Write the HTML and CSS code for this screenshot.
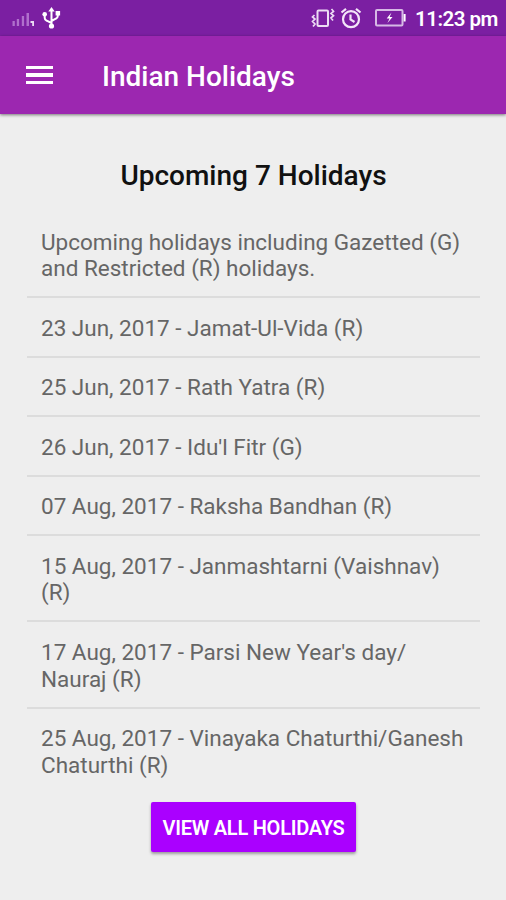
FILE: index.html
```html
<!DOCTYPE html>
<html lang="en">
<head>
    <meta charset="UTF-8">
    <meta name="viewport" content="width=device-width, initial-scale=1.0">
    <title>Indian Holidays</title>
    <link rel="stylesheet" href="styles.css">
</head>
<body>
    <!-- Status bar -->
    <div class="status-bar">
        <svg class="signal" width="23" height="17" viewBox="0 0 23 17" fill="#b070cc">
            <rect x="0.5" y="11" width="2.3" height="5"/>
            <rect x="4.8" y="9" width="2.3" height="7"/>
            <rect x="9.8" y="6" width="2.3" height="10"/>
            <rect x="14.5" y="3" width="2.5" height="13"/>
            <path fill="#eadcf3" d="M18.5 11H22v5h-1.8v-3h-1.7z"/>
        </svg>
        <svg class="usb" width="19" height="22" viewBox="0 0 19 22" fill="none" stroke="#fff" stroke-width="2">
            <path d="M9.5 3v16M2.7 8v3q0 2 2 2.7l4.8 2.3M15.8 6v3q0 2-2 2.7l-4.3 2.3"/>
            <path d="M9.5 0l3.2 4.5H6.3z" fill="#fff" stroke="none"/>
            <circle cx="2.7" cy="7.3" r="2.3" fill="#fff" stroke="none"/>
            <rect x="13.6" y="4" width="4.5" height="4.5" fill="#fff" stroke="none"/>
            <circle cx="9.5" cy="19" r="2.6" fill="#fff" stroke="none"/>
        </svg>
        <div class="status-right">
            <svg class="vibrate" width="24" height="21" viewBox="0 0 24 21" fill="none" stroke="#ecdcf4" stroke-width="2">
                <rect x="6.5" y="2.5" width="10.5" height="15.5" rx="1"/>
                <path d="M3.5 7l-2 2 2.5 2-2.5 2.5L4 16l-2 2.5M20.5 1l2 2.3L20 5.5l2.5 2.2-2.5 2.2 2 2.6" stroke-width="1.7"/>
            </svg>
            <svg class="alarm" width="22" height="22" viewBox="0 0 22 22" fill="none" stroke="#f3e5f8" stroke-width="2.2">
                <circle cx="11" cy="12.2" r="8"/>
                <path d="M10.5 7.5v5l4 2.5M1.5 5.5L6 1.8M16 1.8l4.5 3.7"/>
            </svg>
            <svg class="battery" width="31" height="18" viewBox="0 0 31 18" fill="none" stroke="#d6b9e5" stroke-width="2">
                <rect x="1" y="1" width="26.5" height="15.5" rx="1"/>
                <path d="M29.6 5v7.5" stroke="#fff" stroke-width="2"/>
                <path d="M16.5 3.5l-4.8 6h2.9L12.5 14l5-6h-2.9z" fill="#fff" stroke="none"/>
            </svg>
            <span class="clock">11:23 pm</span>
        </div>
    </div>

    <!-- App bar -->
    <header class="app-bar">
        <button class="menu-btn" aria-label="Menu">
            <span></span>
            <span></span>
            <span></span>
        </button>
        <h1>Indian Holidays</h1>
    </header>

    <!-- Holiday list -->
    <main class="content">
        <h2>Upcoming 7 Holidays</h2>
        <ul class="holidays">
            <li>Upcoming holidays including Gazetted (G)<br>and Restricted (R) holidays.</li>
            <li>23 Jun, 2017 - Jamat-Ul-Vida (R)</li>
            <li>25 Jun, 2017 - Rath Yatra (R)</li>
            <li>26 Jun, 2017 - Idu'l Fitr (G)</li>
            <li>07 Aug, 2017 - Raksha Bandhan (R)</li>
            <li>15 Aug, 2017 - Janmashtarni (Vaishnav)<br>(R)</li>
            <li>17 Aug, 2017 - Parsi New Year's day/<br>Nauraj (R)</li>
            <li>25 Aug, 2017 - Vinayaka Chaturthi/Ganesh<br>Chaturthi (R)</li>
        </ul>
        <button class="view-all">VIEW ALL HOLIDAYS</button>
    </main>
</body>
</html>
```
FILE: styles.css
```css
* {
    box-sizing: border-box;
    margin: 0;
    padding: 0;
}

body {
    min-height: 100vh;
    background-color: #eee;
    font-family: Roboto, "Liberation Sans", sans-serif;
}

/* Status bar */
.status-bar {
    display: flex;
    align-items: center;
    height: 36px;
    padding: 0 8px 0 12px;
    background-color: #7b1fa2;
    color: #fff;
}

.status-bar svg {
    flex: none;
}

.signal {
    margin-right: 7px;
}

.status-right {
    display: flex;
    align-items: center;
    margin-left: auto;
}

.alarm {
    margin-left: 5px;
}

.battery {
    margin-left: 13px;
}

.clock {
    width: 83px;
    margin-left: 9px;
    padding-top: 2px;
    font-size: 20.5px;
    font-weight: 600;
    letter-spacing: -0.5px;
    white-space: nowrap;
}

/* App bar */
.app-bar {
    display: flex;
    align-items: center;
    height: 78px;
    padding-left: 26px;
    background-color: #9c27b0;
    color: #fff;
    box-shadow: 0 1px 3px rgba(0, 0, 0, 0.5);
}

.menu-btn {
    display: flex;
    flex-direction: column;
    gap: 4px;
    width: 27px;
    margin-right: 49px;
    border: none;
    background: none;
}

.menu-btn span {
    height: 3.5px;
    background-color: #fff;
}

.app-bar h1 {
    padding-top: 3px;
    font-size: 28px;
    font-weight: 500;
}

/* Content */
.content {
    display: flex;
    flex-direction: column;
    align-items: center;
    padding: 45px 26px 0 27px;
}

.content h2 {
    color: #111;
    font-size: 28px;
    font-weight: 500;
    line-height: 34px;
}

.holidays {
    width: 100%;
    margin-top: 19px;
    list-style: none;
}

.holidays li {
    padding: 16.5px 0 14.3px 14px;
    border-bottom: 2px solid #dcdcdc;
    color: #666;
    font-size: 22.5px;
    line-height: 26.7px;
    white-space: nowrap;
}

.holidays li:last-child {
    border-bottom: none;
}

.view-all {
    width: 205px;
    height: 50px;
    margin-top: 9px;
    padding-top: 2px;
    border: none;
    border-radius: 2px;
    background-color: #aa00ff;
    box-shadow: 0 2px 3px rgba(0, 0, 0, 0.35);
    color: #fff;
    font-family: inherit;
    font-size: 20px;
    font-weight: 600;
    letter-spacing: -0.25px;
    white-space: nowrap;
    cursor: pointer;
}
```
